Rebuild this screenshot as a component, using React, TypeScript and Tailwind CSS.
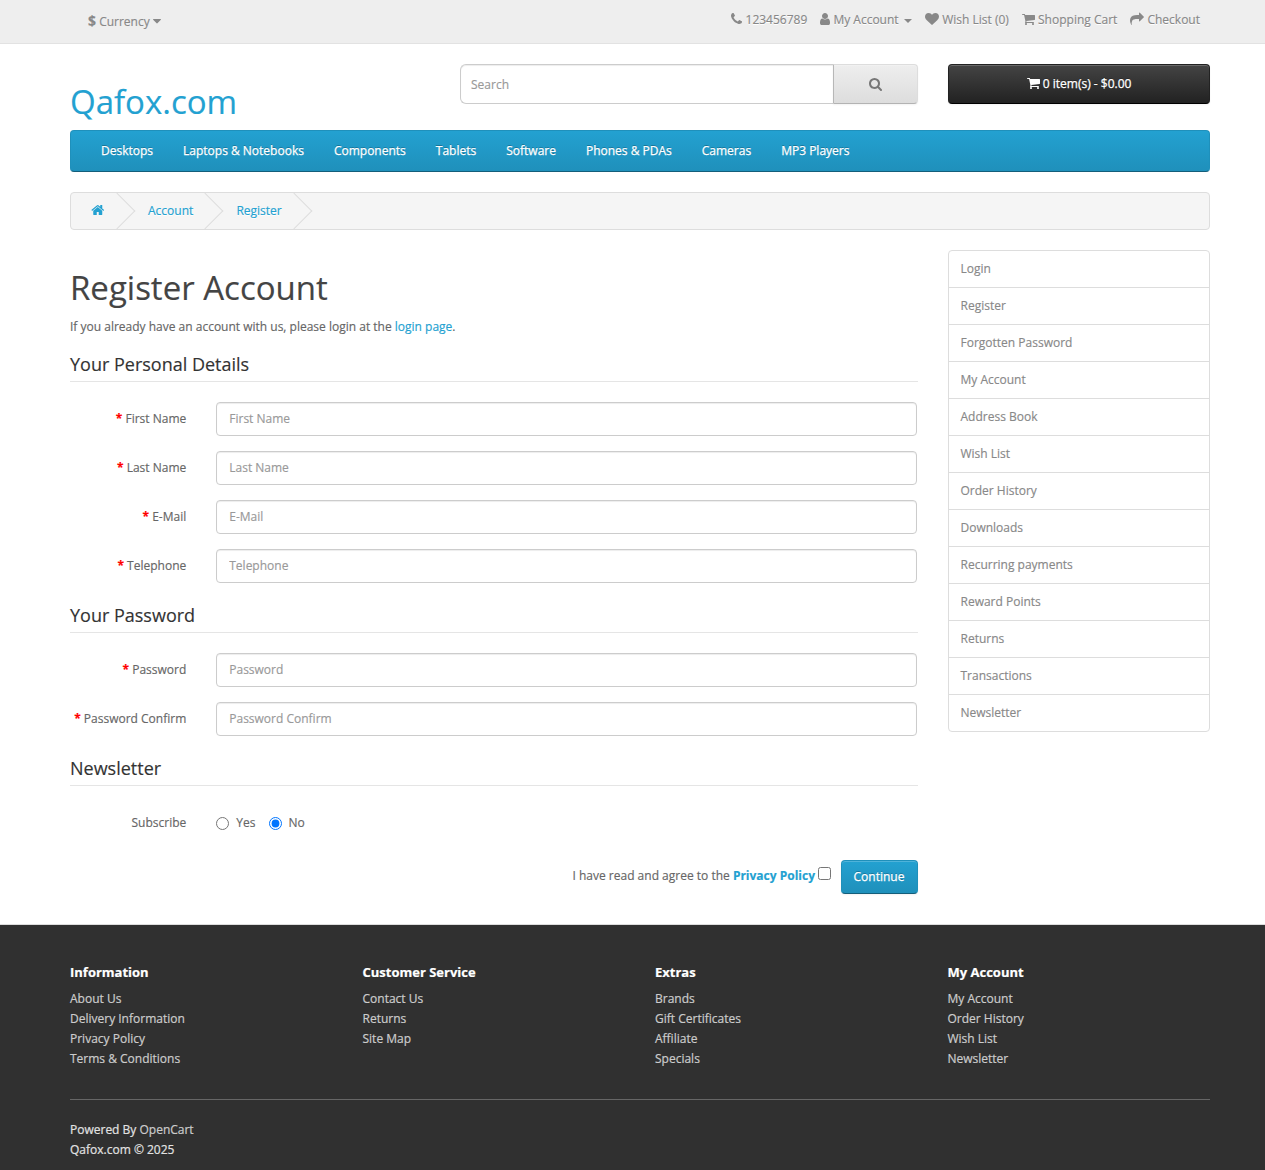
import React from "react";

const glyphs = {
  phone: { x: 192, w: 1408, d: "M1600 1240q0 27-10 70.5t-21 68.5q-21 50-122 106-94 51-186 51-27 0-53-3.5t-57.5-12.5-47-14.5-55.5-20.5-49-18q-98-35-175-83-127-79-264-216t-216-264q-48-77-83-175-3-9-18-49t-20.5-55.5-14.5-47-12.5-57.5-3.5-53q0-92 51-186 56-101 106-122 25-11 68.5-21t70.5-10q14 0 21 3 18 6 53 76 11 19 30 54t35 63.5 31 53.5q3 4 17.5 25t21.5 35.5 7 28.5q0 20-28.5 50t-62 55-62 53-28.5 46q0 9 5 22.5t8.5 20.5 14 24 11.5 19q76 137 174 235t235 174q2 1 19 11.5t24 14 20.5 8.5 22.5 5q18 0 46-28.5t53-62 55-62 50-28.5q14 0 28.5 7t35.5 21.5 25 17.5q25 15 53.5 31t63.5 35 54 30q70 35 76 53 3 7 3 21z" },
  user: { x: 256, w: 1280, d: "M1536 1399q0 109-62.5 187t-150.5 78h-854q-88 0-150.5-78t-62.5-187q0-85 8.5-160.5t31.5-152 58.5-131 94-89 134.5-34.5q131 128 313 128t313-128q76 0 134.5 34.5t94 89 58.5 131 31.5 152 8.5 160.5zm-256-887q0 159-112.5 271.5t-271.5 112.5-271.5-112.5-112.5-271.5 112.5-271.5 271.5-112.5 271.5 112.5 112.5 271.5z" },
  heart: { x: 0, w: 1792, d: "M896 1664q-26 0-44-18l-624-602q-10-8-27.5-26t-55.5-65.5-68-97.5-53.5-121-23.5-138q0-220 127-344t351-124q62 0 126.5 21.5t120 58 95.5 68.5 76 68q36-36 76-68t95.5-68.5 120-58 126.5-21.5q224 0 351 124t127 344q0 221-229 450l-623 600q-18 18-44 18z" },
  cart: { x: 64, w: 1664, d: "M704 1536q0 52-38 90t-90 38-90-38-38-90 38-90 90-38 90 38 38 90zm896 0q0 52-38 90t-90 38-90-38-38-90 38-90 90-38 90 38 38 90zm128-1088v512q0 24-16.5 42.5t-40.5 21.5l-1044 122q13 60 13 70 0 16-24 64h920q26 0 45 19t19 45-19 45-45 19h-1024q-26 0-45-19t-19-45q0-11 8-31.5t16-36 21.5-40 15.5-29.5l-177-823h-204q-26 0-45-19t-19-45 19-45 45-19h256q16 0 28.5 6.5t19.5 15.5 13 24.5 8 26 5.5 29.5 4.5 26h1201q26 0 45 19t19 45z" },
  share: { x: 0, w: 1792, d: "M1792 640q0 26-19 45l-512 512q-19 19-45 19t-45-19-19-45v-256h-224q-98 0-175.5 6t-154 21.5-133 42.5-105.5 69.5-80 101-48.5 138.5-17.5 181q0 55 5 123 0 6 2.5 23.5t2.5 26.5q0 15-8.5 25t-23.5 10q-16 0-28-17-7-9-13-22t-13.5-30-10.5-24q-127-285-127-451 0-199 53-333 162-403 875-403h224v-256q0-26 19-45t45-19 45 19l512 512q19 19 19 45z" },
  search: { x: 64, w: 1664, d: "M1216 832q0-185-131.5-316.5t-316.5-131.5-316.5 131.5-131.5 316.5 131.5 316.5 316.5 131.5 316.5-131.5 131.5-316.5zm512 832q0 52-38 90t-90 38q-54 0-90-38l-343-342q-179 124-399 124-143 0-273.5-55.5t-225-150-150-225-55.5-273.5 55.5-273.5 150-225 225-150 273.5-55.5 273.5 55.5 225 150 150 225 55.5 273.5q0 220-124 399l343 343q37 37 37 90z" },
  home: { x: 32, w: 1728, d: "M1472 992v480q0 26-19 45t-45 19h-384v-384h-256v384h-384q-26 0-45-19t-19-45v-480q0-1 .5-3t.5-3l575-474 575 474q1 2 1 6zm223-69l-62 74q-8 9-21 11h-3q-13 0-21-7l-692-577-692 577q-12 8-24 7-13-2-21-11l-62-74q-8-10-7-23.5t11-21.5l719-599q32-26 76-26t76 26l244 204v-195q0-14 9-23t23-9h192q14 0 23 9t9 23v408l219 182q10 8 11 21.5t-7 23.5z" },
  caret: { x: 384, w: 1024, d: "M1408 704q0 26-19 45l-448 448q-19 19-45 19t-45-19l-448-448q-19-19-19-45t19-45 45-19h896q26 0 45 19t19 45z" },
};

function Icon({ name }: { name: keyof typeof glyphs }) {
  const g = glyphs[name];
  return (
    <svg
      className="inline-block shrink-0 align-[-2px]"
      width={(g.w / 1792) * 14}
      height={14}
      viewBox={`${g.x} 0 ${g.w} 1792`}
      fill="currentColor"
      aria-hidden="true"
    >
      <path d={g.d} />
    </svg>
  );
}

const container = "ml-[55px] w-[1170px] px-[15px]";

function TopBar() {
  return (
    <nav className="mb-5 h-11 border-b border-[#e2e2e2] bg-[#eeeeee] text-[#888888] [text-shadow:0_1px_0_#fff]">
      <div className={`${container} flex justify-between`}>
        <button className="ml-[18px] mt-[11px] h-5">
          <strong className="text-sm leading-5">$</strong> <span>Currency</span> <Icon name="caret" />
        </button>
        <ul className="mr-[10px] mt-[10px] flex gap-[13px]">
          <li><Icon name="phone" /> 123456789</li>
          <li className="mr-[0.4px]">
            <Icon name="user" /> My Account{" "}
            <span className="ml-0.5 inline-block border-x-4 border-t-4 border-x-transparent border-t-[#888888] align-middle" />
          </li>
          <li><Icon name="heart" /> Wish List (0)</li>
          <li><Icon name="cart" /> Shopping Cart</li>
          <li><Icon name="share" /> Checkout</li>
        </ul>
      </div>
    </nav>
  );
}

function Header() {
  return (
    <header className={`${container} flex h-[66px]`}>
      <h1 className="w-[390px] pt-[19.5px] text-[33px] leading-[36px] text-[#23a1d1]">Qafox.com</h1>
      <div className="mr-[30px] flex h-10 w-[457.5px]">
        <input
          placeholder="Search"
          className="h-10 min-w-0 flex-1 rounded-l-md border border-r-0 border-[#cccccc] px-[10px] text-xs leading-5 shadow-[inset_0_1px_1px_rgba(0,0,0,0.075)] placeholder:text-[#999999]"
        />
        <button className="h-10 w-[85px] rounded-r border border-t-[#dddddd] border-r-[#dddddd] border-b-[#b3b3b3] border-l-[#b7b7b7] bg-linear-to-b from-[#eeeeee] to-[#dddddd] pt-0.5 text-[#777777] shadow-[inset_0_1px_0_rgba(255,255,255,0.2),0_1px_2px_rgba(0,0,0,0.05)]">
          <Icon name="search" />
        </button>
      </div>
      <button className="h-10 w-[262.5px] rounded border border-[#222222] border-b-black bg-linear-to-b from-[#444444] to-[#222222] pl-[0.5px] text-white shadow-[inset_0_1px_0_rgba(255,255,255,0.2),0_1px_2px_rgba(0,0,0,0.05)] [-webkit-text-stroke:0.25px] [text-shadow:0_-1px_0_rgba(0,0,0,0.25)]">
        <Icon name="cart" /> 0 item(s) - $0.00
      </button>
    </header>
  );
}

const categories = ["Desktops", "Laptops & Notebooks", "Components", "Tablets", "Software", "Phones & PDAs", "Cameras", "MP3 Players"];

function Menu() {
  return (
    <div className={container}>
      <ul className="mb-5 flex h-[42px] rounded border border-[#1f90bb] border-b-[#145e7a] bg-linear-to-b from-[#23a1d1] to-[#1f90bb] pl-[15px] text-white [-webkit-text-stroke:0.25px] [text-shadow:0_-1px_0_rgba(0,0,0,0.25)]">
        {categories.map((c) => (
          <li key={c} className="px-[15px] py-[10px]">{c}</li>
        ))}
      </ul>
    </div>
  );
}

function Breadcrumb() {
  const items = [<Icon name="home" />, "Account", "Register"];
  return (
    <div className={container}>
      <ul className="mb-5 flex h-[38px] gap-[3.1px] overflow-hidden rounded border border-[#dddddd] bg-[#f5f5f5] py-2 text-[#23a1d1] [text-shadow:0_1px_0_#fff]">
        {items.map((item, i) => (
          <li
            key={i}
            className="relative px-5 after:absolute after:-right-[5px] after:-top-[3px] after:h-[26px] after:w-[26px] after:-rotate-45 after:border-b after:border-r after:border-[#dddddd] first:mr-[0.4px]"
          >
            {item}
          </li>
        ))}
      </ul>
    </div>
  );
}

function Legend({ children }: { children: React.ReactNode }) {
  return <legend className="mb-5 block w-full border-b border-[#e5e5e5] py-[7px] text-lg leading-5 text-[#333333]">{children}</legend>;
}

function Field({ label, type = "text" }: { label: string; type?: string }) {
  return (
    <div className="mb-[15px] flex h-[34px] gap-[30px]">
      <label className="-ml-[15px] w-[131.25px] shrink-0 whitespace-nowrap pt-[7px] text-right">
        <span className="font-bold text-[#ff0000]">* </span>
        {label}
      </label>
      <input
        type={type}
        placeholder={label}
        className="h-[34px] w-[701px] rounded border border-[#cccccc] bg-white px-3 pb-[7px] pt-[5px] text-xs leading-5 shadow-[inset_0_1px_1px_rgba(0,0,0,0.075)] placeholder:text-[#999999]"
      />
    </div>
  );
}

function RegisterForm() {
  return (
    <main className="w-[847.5px]">
      <h1 className="mb-[11px] mt-5 text-[33px] leading-[36px] text-[#444444]">Register Account</h1>
      <p className="mb-[10px]">
        If you already have an account with us, please login at the <a className="text-[#23a1d1]">login page</a>.
      </p>
      <fieldset>
        <Legend>Your Personal Details</Legend>
        <Field label="First Name" />
        <Field label="Last Name" />
        <Field label="E-Mail" type="email" />
        <Field label="Telephone" type="tel" />
      </fieldset>
      <fieldset>
        <Legend>Your Password</Legend>
        <Field label="Password" type="password" />
        <Field label="Password Confirm" type="password" />
      </fieldset>
      <fieldset>
        <Legend>Newsletter</Legend>
        <div className="flex h-[54px] gap-[30px] pt-[7px]">
          <span className="-ml-[15px] w-[131.25px] text-right">Subscribe</span>
          <div className="flex">
            <label className="mr-[13.5px] flex">
              <input type="radio" name="newsletter" className="mr-[7px] mt-1 h-[13px] w-[13px]" />
              Yes
            </label>
            <label className="flex">
              <input type="radio" name="newsletter" defaultChecked className="mr-[6.5px] mt-1 h-[13px] w-[13px]" />
              No
            </label>
          </div>
        </div>
      </fieldset>
      <div className="mb-[30px] flex h-[34px] justify-end">
        <span className="mt-[6px]">
          I have read and agree to the <b className="text-[#23a1d1]">Privacy Policy</b>
        </span>
        <input type="checkbox" className="ml-[2.5px] mr-[10px] mt-[7px] h-[13px] w-[13px]" />
        <button className="h-[34px] w-[77px] rounded border border-[#1f90bb] border-b-[#145e7a] bg-linear-to-b from-[#23a1d1] to-[#1f90bb] text-white shadow-[inset_0_1px_0_rgba(255,255,255,0.2),0_1px_2px_rgba(0,0,0,0.05)] [-webkit-text-stroke:0.25px] [text-shadow:0_-1px_0_rgba(0,0,0,0.25)]">
          Continue
        </button>
      </div>
    </main>
  );
}

const sideLinks = ["Login", "Register", "Forgotten Password", "My Account", "Address Book", "Wish List", "Order History", "Downloads", "Recurring payments", "Reward Points", "Returns", "Transactions", "Newsletter"];

function Sidebar() {
  return (
    <aside className="w-[262.5px]">
      <ul className="rounded border border-[#dddddd] text-[#888888]">
        {sideLinks.map((l) => (
          <li key={l} className="h-[37px] border-b border-[#dddddd] px-3 py-2 last:h-9 last:border-b-0">{l}</li>
        ))}
      </ul>
    </aside>
  );
}

const footerColumns = [
  { title: "Information", links: ["About Us", "Delivery Information", "Privacy Policy", "Terms & Conditions"] },
  { title: "Customer Service", links: ["Contact Us", "Returns", "Site Map"] },
  { title: "Extras", links: ["Brands", "Gift Certificates", "Affiliate", "Specials"] },
  { title: "My Account", links: ["My Account", "Order History", "Wish List", "Newsletter"] },
];

function Footer() {
  return (
    <footer className="h-[246px] border-t border-[#dddddd] bg-[#303030] pt-[30px] text-[#e2e2e2] [-webkit-text-stroke:0.2px]">
      <div className={container}>
        <div className="flex h-[145px] border-b border-[#666666] pt-[10px]">
          {footerColumns.map((c) => (
            <div key={c.title} className="w-[292.5px] shrink-0">
              <h5 className="mb-[10px] text-[13px] font-bold leading-[14.3px] text-white">{c.title}</h5>
              <ul className="text-[#cccccc]">
                {c.links.map((l) => (
                  <li key={l}>{l}</li>
                ))}
              </ul>
            </div>
          ))}
        </div>
        <p className="mt-5">
          Powered By <a className="text-[#cccccc]">OpenCart</a>
          <br />
          Qafox.com © 2025
        </p>
      </div>
    </footer>
  );
}

export default function App() {
  return (
    <div className="h-[1170px] w-[1265px] overflow-hidden bg-white font-['Open_Sans',sans-serif] text-xs leading-5 text-[#666666] [-webkit-text-stroke:0.15px]">
      <TopBar />
      <Header />
      <Menu />
      <Breadcrumb />
      <div className={`${container} flex h-[674px] gap-[30px]`}>
        <RegisterForm />
        <Sidebar />
      </div>
      <Footer />
    </div>
  );
}
